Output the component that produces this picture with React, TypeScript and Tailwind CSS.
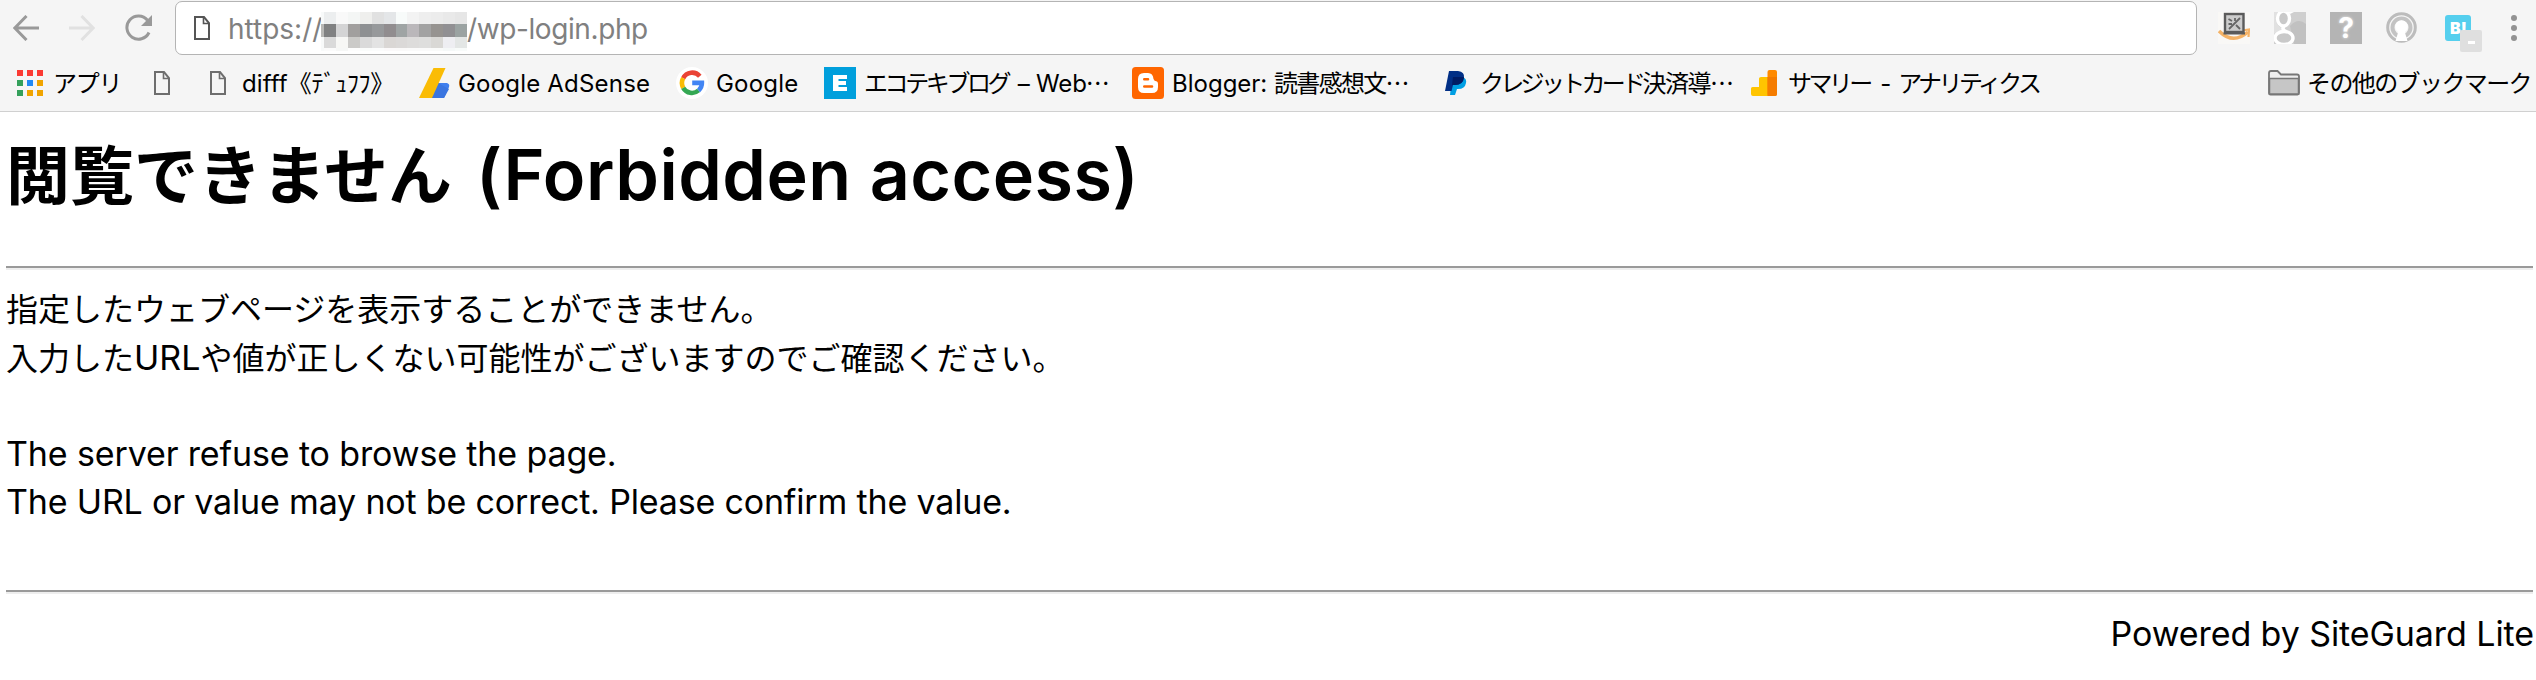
import type { ReactNode } from "react";

function PageIcon({ color }: { color: string }) {
  return (
    <svg className="h-6 w-4 shrink-0" viewBox="0 0 16 24" fill="none" stroke={color} strokeWidth="2">
      <path d="M1 1H10L15 7V23H1Z" />
      <path d="M9.5 1V7.5H15" strokeWidth="1.6" />
    </svg>
  );
}

function NavIcons() {
  return (
    <div className="flex h-[55px] w-[175px] shrink-0 items-center pl-[13px]">
      <svg className="h-[26px] w-[26px]" viewBox="0 0 26 26" fill="none" stroke="#999" strokeWidth="3">
        <path d="M26 13H2M13.5 1L1.8 13L13.5 25" />
      </svg>
      <svg className="ml-[30px] h-[26px] w-[26px]" viewBox="0 0 26 26" fill="none" stroke="#e1e1e1" strokeWidth="3">
        <path d="M0 13H24M12.5 1L24.2 13L12.5 25" />
      </svg>
      <svg className="ml-[30px] h-[28px] w-[28px]" viewBox="0 0 28 28" fill="none" stroke="#999" strokeWidth="3">
        <path d="M22.5 6.2A11.6 11.6 0 1 0 24 18.5" />
        <path d="M27 1V12H16Z" fill="#999" stroke="none" />
      </svg>
    </div>
  );
}

const MOSAIC: { h: string; cells: string[] }[] = [
  { h: "h-[12px]", cells: ["#eceeef", "#f9f9f9", "#f4f6f5", "#efefed", "#e1e1e1", "#e4e6e8", "#f8fbfa", "#f3f3f3", "#eeeeee", "#ececec", "#e9e9e9", "#e6e6e6"] },
  { h: "h-[13px]", cells: ["#808182", "#d4d4d5", "#a19f9e", "#8e9092", "#97999b", "#918d8f", "#9fa4a4", "#bab7ba", "#a2a2a2", "#969390", "#919093", "#9ba3a2"] },
  { h: "h-[11px]", cells: ["#dadada", "#f7f7f5", "#cbcac8", "#dadada", "#e3e3e3", "#dad7d5", "#dbd9d8", "#dddcdb", "#dededd", "#d9d8d5", "#eeeef2", "#e3e6e5"] },
  { h: "h-[3px]", cells: ["#fbfbfb", "#f6f7f6", "#fdfdfd", "#fafcfb", "#fbfcfc", "#fbf9fa", "#faf9f9", "#fafafa", "#fafafa", "#f9faf9", "#f5f8f8", "#f8fbfa"] },
];

function Mosaic() {
  return (
    <div className="flex h-[39px] w-[146px] shrink-0 flex-col">
      {MOSAIC.map((row, i) => (
        <div key={i} className={`flex ${row.h}`}>
          <div className="w-[3px]" style={{ background: i === 1 ? "#b8b8b6" : "#f8fafa" }} />
          {row.cells.map((c, j) => (
            <div key={j} className="flex-1" style={{ background: c }} />
          ))}
        </div>
      ))}
    </div>
  );
}

function Extensions() {
  return (
    <div className="flex items-center pl-[21px]">
      <svg className="h-8 w-8" viewBox="0 0 32 32">
        <rect width="32" height="32" fill="#f9f8f6" />
        <path d="M1 19Q15 33 30 20" fill="none" stroke="#f4b266" strokeWidth="3.4" />
        <path d="M24 18.5L31 17.5L30.5 25" fill="none" stroke="#f4b266" strokeWidth="2.2" />
        <rect x="7" y="2" width="18.5" height="18" fill="#ccc" stroke="#5b5b5b" strokeWidth="2.4" />
        <path d="M5.5 21.5H27" stroke="#5b5b5b" strokeWidth="2" />
        <path d="M10.5 7L14 9M10.5 12H14M11 17L22 6M17 6V9M18 13L22 17" stroke="#666" strokeWidth="1.8" />
      </svg>
      <svg className="ml-6 h-8 w-8" viewBox="0 0 32 32">
        <rect width="32" height="32" fill="#cfcfcf" />
        <path d="M16 14Q24 5 32 12V32H20Z" fill="#c1c1c1" />
        <path d="M0 0H4Q0 6 3 12Q5 15 9 16L8 19Q3 19 0 22Z" fill="#e1e1e1" />
        <ellipse cx="9.5" cy="6.5" rx="6" ry="7.5" fill="#c9c9c9" stroke="#fff" strokeWidth="3.4" />
        <path d="M14 0H20L16 2" fill="#fff" />
        <path d="M10 14Q7 18 13 20" fill="none" stroke="#fff" strokeWidth="3.6" />
        <ellipse cx="10" cy="26" rx="9" ry="6.5" fill="#c9c9c9" stroke="#fff" strokeWidth="3.4" />
      </svg>
      <div className="ml-6 flex h-8 w-8 items-center justify-center bg-[#b4b4b4] text-[28px] leading-none font-bold text-white [text-shadow:0_0_3px_#eee]">?</div>
      <svg className="ml-6 h-[31px] w-[31px]" viewBox="0 0 31 31">
        <circle cx="15.5" cy="15.5" r="13.8" fill="#f5f5f5" stroke="#bcbcbc" strokeWidth="3" />
        <circle cx="15.5" cy="15.5" r="9" fill="none" stroke="#c3c3c3" strokeWidth="4" />
        <circle cx="15.5" cy="14.5" r="6.3" fill="#fff" />
        <path d="M12.5 19H18.5L21.5 29H9.5Z" fill="#fff" />
      </svg>
      <div className="relative ml-7 h-[26px] w-[26px] rounded-[3px] bg-[#55cfee]">
        <span className="absolute top-[5px] left-[5px] text-[16px] leading-none font-black text-white">B!</span>
        <span className="absolute top-[15px] left-[15px] flex h-[22px] w-[22px] items-center justify-center rounded-[2px] bg-[#dfdfdf]">
          <span className="mt-[3px] h-[3px] w-[7px] bg-white" />
        </span>
      </div>
      <div className="ml-[40px] flex flex-col gap-[4px]">
        <i className="h-[6px] w-[6px] rounded-full bg-[#929292]" />
        <i className="h-[6px] w-[6px] rounded-full bg-[#929292]" />
        <i className="h-[6px] w-[6px] rounded-full bg-[#929292]" />
      </div>
    </div>
  );
}

function Bookmark({ width, gap, icon, children }: { width: string; gap: string; icon: ReactNode; children?: ReactNode }) {
  return (
    <div className={`flex shrink-0 items-center whitespace-pre ${width} ${gap}`}>
      {icon}
      <span className="flex h-8 items-center pt-px leading-8">{children}</span>
    </div>
  );
}

const APP_COLORS = ["bg-[#fb3a33]", "bg-[#fb3a33]", "bg-[#fb3a33]", "bg-[#34a05b]", "bg-[#2189f5]", "bg-[#f0a400]", "bg-[#34a05b]", "bg-[#f0a400]", "bg-[#f0a400]"];

function BookmarksBar() {
  return (
    <div className="flex h-[56px] items-center text-[24px] text-black">
      <Bookmark
        width="w-[137px] ml-[17px]"
        gap="gap-[10px]"
        icon={
          <div className="grid grid-cols-3 gap-[4px]">
            {APP_COLORS.map((c, i) => (
              <i key={i} className={`h-[6px] w-[6px] ${c}`} />
            ))}
          </div>
        }
      >
        <span className="tracking-[-1.3px]">アプリ</span>
      </Bookmark>
      <Bookmark width="w-[56px]" gap="gap-4" icon={<PageIcon color="#6e6e6e" />} />
      <Bookmark width="w-[208px]" gap="gap-4" icon={<PageIcon color="#6e6e6e" />}>
        <span className="tracking-[0.1px]">difff</span>
        <span className="tracking-[-0.3px]">《ﾃﾞｭﾌﾌ》</span>
      </Bookmark>
      <Bookmark
        width="w-[258px]"
        gap="gap-[8px]"
        icon={
          <svg className="h-8 w-8" viewBox="0 0 32 32">
            <path d="M19 16H29Q32 17 31 20L26 31H12Z" fill="#3f7fee" />
            <path d="M20 16L31 22L26 31H13Z" fill="#3a75e0" />
            <path d="M15.5 1H27.5L14 31H1Z" fill="#fabc05" />
          </svg>
        }
      >
        <span className="tracking-[0.2px]">Google AdSense</span>
      </Bookmark>
      <Bookmark
        width="w-[148px]"
        gap="gap-[8px]"
        icon={
          <svg className="h-8 w-8" viewBox="0 0 32 32">
            <circle cx="16" cy="16" r="16" fill="#fff" />
            <g fill="none" strokeWidth="4.6">
              <path d="M23.8 9.2A10 10 0 0 0 7.2 11.2" stroke="#ea4335" />
              <path d="M7.2 11.2A10 10 0 0 0 7.2 20.8" stroke="#fbbc05" />
              <path d="M7.2 20.8A10 10 0 0 0 22.6 23.4" stroke="#34a853" />
              <path d="M22.6 23.4Q26 20.5 25.9 15.9H16.2" stroke="#4285f4" />
            </g>
          </svg>
        }
      >
        <span className="tracking-[0.2px]">Google</span>
      </Bookmark>
      <Bookmark
        width="w-[308px]"
        gap="gap-[8px]"
        icon={
          <svg className="h-8 w-8" viewBox="0 0 32 32">
            <rect width="32" height="32" fill="#009fdc" />
            <path d="M9 8H23V12H14.5V14H22V18H14.5V20H23V24H9Z" fill="#fff" />
          </svg>
        }
      >
        <span className="tracking-[-3.4px]">エコテキブログ</span>
        <span className="ml-[3px] tracking-[-0.2px]"> – Web</span>
        <span className="-ml-[1px]">⋯</span>
      </Bookmark>
      <Bookmark
        width="w-[313px]"
        gap="gap-[8px]"
        icon={
          <svg className="h-8 w-8" viewBox="0 0 32 32">
            <rect width="32" height="32" rx="3.5" fill="#ff6600" />
            <path d="M12 6H16Q21 6 21.5 12Q22 14 25 14.5Q26 15 26 17V20Q26 26 20 26H12Q6 26 6 20V12Q6 6 12 6Z" fill="#fff" />
            <path d="M12.3 12.3H16M12.3 19.5H20" stroke="#ff6600" strokeWidth="2.6" strokeLinecap="round" />
          </svg>
        }
      >
        <span>Blogger: </span>
        <span className="tracking-[-1.7px]">読書感想文⋯</span>
      </Bookmark>
      <Bookmark
        width="w-[306px]"
        gap="gap-[13px]"
        icon={
          <svg className="h-6 w-[22px]" viewBox="0 0 22 24">
            <path d="M7 6H18Q22 8 21 12Q20 18 13 18H12L10 24H5Z" fill="#009fe3" />
            <path d="M4 0H13Q20 1 19 7Q18 14 10 14H8L6.5 20H0Z" fill="#012f86" />
            <path d="M8 6H19Q18 14 10 14H7Z" fill="#001c64" />
          </svg>
        }
      >
        <span className="tracking-[-3.7px]">クレジットカード</span>
        <span className="tracking-[-1.5px]">決済導⋯</span>
      </Bookmark>
      <Bookmark
        width="w-[517px]"
        gap="gap-[11px]"
        icon={
          <svg className="h-[32px] w-[26px]" viewBox="0 0 26 32">
            <path d="M1.5 20H8V11.5Q8 10 10 10H17V29H2Q0 29 0 27V21.5Q0 20 1.5 20Z" fill="#ffc400" />
            <rect x="16.5" y="3" width="9.5" height="26" rx="2" fill="#ff8a00" />
            <path d="M16.5 10H26V27Q26 29 24 29H16.5Z" fill="#f57c00" />
          </svg>
        }
      >
        <span className="tracking-[-3.6px]">サマリー</span>
        <span className="ml-[4px]"> - </span>
        <span className="tracking-[-3.6px]">アナリティクス</span>
      </Bookmark>
      <Bookmark
        width="w-[268px]"
        gap="gap-[7px]"
        icon={
          <svg className="h-[26px] w-8 shrink-0" viewBox="0 0 32 26">
            <path d="M1 3Q1 1 3 1H9.5L13 4.5H29Q31 4.5 31 6.5V23Q31 24.5 29.5 24.5H2.5Q1 24.5 1 23Z" fill="#eee" stroke="#777" strokeWidth="1.8" />
            <path d="M1.5 8.5H30.5V24H1.5Z" fill="#c6c6c6" stroke="#777" strokeWidth="1.5" />
          </svg>
        }
      >
        <span className="tracking-[-1.6px]">その他のブックマーク</span>
      </Bookmark>
    </div>
  );
}

function Rule() {
  return <div className="h-[4px] w-full border-t-2 border-b-2 border-t-[#9a9a9a] border-b-[#eee]" />;
}

export default function App() {
  return (
    <div className="h-[680px] w-[2536px] overflow-hidden bg-white font-['Inter','Noto_Sans_CJK_JP',sans-serif] text-black">
      <header className="h-[112px] border-b border-[#d0d0d0] bg-[#f5f5f5]">
        <div className="flex h-[55px]">
          <NavIcons />
          <div className="mt-px flex h-[54px] w-[2022px] shrink-0 items-center rounded-[7px] border border-[#b4b4b4] bg-white pl-[18px] text-[28px] text-[#808080]">
            <PageIcon color="#555" />
            <span className="ml-[18px] w-[93px] pt-[2px] leading-9">https://</span>
            <div className="mt-[8px] h-[39px] -translate-y-px">
              <Mosaic />
            </div>
            <span className="pt-[2px] leading-9 tracking-[-0.4px]">/wp-login.php</span>
          </div>
          <Extensions />
        </div>
        <BookmarksBar />
      </header>
      <main className="pr-[3px] pl-[6px]">
        <h1 className="flex h-[154px] items-baseline pt-[15px] text-[64px] leading-[96px] font-bold">
          <span className="relative -top-px">閲覧できません</span>
          <span className="ml-[24px] text-[70px] font-semibold tracking-[0.45px]">(Forbidden access)</span>
        </h1>
        <Rule />
        <div className="mt-[16px] text-[32px] leading-[48px]">
          <p className="h-12">指定したウェブページを表示することができません。</p>
          <p className="h-12">
            入力した<span className="text-[34px]">URL</span>や値が正しくない可能性がございますのでご確認ください。
          </p>
          <div className="h-12" />
          <p className="h-12 text-[34px] tracking-[-0.13px]">The server refuse to browse the page.</p>
          <p className="h-12 text-[34px] tracking-[-0.17px]">The URL or value may not be correct. Please confirm the value.</p>
        </div>
        <div className="mt-[64px]">
          <Rule />
        </div>
        <p className="-mr-px mt-[16px] text-right text-[34px] leading-[48px] tracking-[-0.08px]">Powered by SiteGuard Lite</p>
      </main>
    </div>
  );
}
